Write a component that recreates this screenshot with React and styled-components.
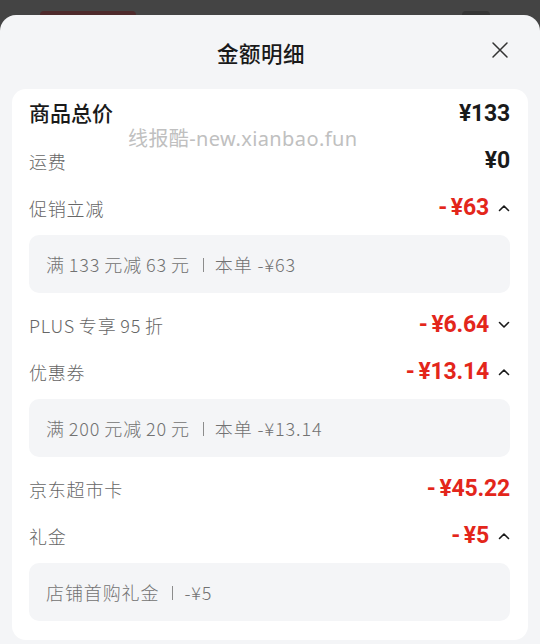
import React from "react";
import styled, { createGlobalStyle } from "styled-components";

const GlobalStyle = createGlobalStyle`
  html, body {
    margin: 0;
    padding: 0;
    background: #444444;
  }
  body {
    font-family: "Noto Sans CJK SC", "Noto Sans", sans-serif;
  }
`;

const Page = styled.div`
  width: 540px;
  height: 644px;
  position: relative;
  overflow: hidden;
  background: #444444;
  padding-top: 15px;
  box-sizing: border-box;
`;

const Peek = styled.div`
  position: absolute;
  top: 11px;
  left: ${(p) => p.left}px;
  width: ${(p) => p.width}px;
  height: 8px;
  border-radius: 5px;
  background: ${(p) => p.color};
`;

const Sheet = styled.div`
  position: relative;
  background: #f4f5f7;
  border-radius: 16px 16px 0 0;
  height: 629px;
  padding: 0 12px;
  box-sizing: border-box;
`;

const Header = styled.div`
  height: 74px;
  display: flex;
  align-items: center;
  justify-content: center;
  position: relative;

  h1 {
    margin: 0 18px 0 0;
    font-size: 21.5px;
    font-weight: 500;
    color: #1a1a1a;
    letter-spacing: 0.5px;
  }
`;

const Close = styled.div`
  position: absolute;
  right: 19px;
  top: 26px;
  width: 18px;
  height: 18px;
  display: flex;
`;

const Card = styled.div`
  position: relative;
  background: #ffffff;
  border-radius: 14px;
  padding: 1px 18px 11px 17px;
`;

const Row = styled.div`
  height: 47px;
  display: flex;
  align-items: center;
  justify-content: space-between;
`;

const Label = styled.span`
  font-size: ${(p) => (p.strong ? "21px" : "18px")};
  font-weight: ${(p) => (p.strong ? 500 : 300)};
  letter-spacing: ${(p) => (p.strong ? "0" : "0.8px")};
  color: ${(p) => (p.strong ? "#1a1a1a" : "#666666")};
  white-space: pre;
  margin-top: ${(p) => (p.strong ? "-3px" : "0")};
`;

const Right = styled.div`
  display: flex;
  align-items: center;
  gap: 9px;
`;

const Amount = styled.span`
  font-family: Roboto, "Noto Sans CJK SC", sans-serif;
  font-size: 23px;
  font-weight: 700;
  letter-spacing: -0.2px;
  color: ${(p) => (p.red ? "#e3261b" : "#1a1a1a")};
  white-space: pre;
`;

const Detail = styled.div`
  height: 58px;
  margin-top: 4px;
  margin-bottom: 8px;
  background: #f4f5f7;
  border-radius: 10px;
  display: flex;
  align-items: center;
  padding-left: 17px;
  font-size: 18px;
  font-weight: 300;
  letter-spacing: 0.9px;
  color: #727272;
  white-space: pre;
`;

const Divider = styled.span`
  width: 1px;
  height: 14px;
  background: #8c8c8c;
  margin: 1px 11px 0 13px;
`;

const Watermark = styled.div`
  position: absolute;
  left: 116px;
  top: 34px;
  font-family: "Noto Sans", "Noto Sans CJK SC", sans-serif;
  font-size: 20px;
  letter-spacing: 0.4px;
  color: #c0c0c0;
  pointer-events: none;
`;

const Chevron = ({ up }) => (
  <svg width="12" height="8" viewBox="0 0 12 8">
    <path
      d={up ? "M1.5 6.5 L6 2 L10.5 6.5" : "M1.5 1.5 L6 6 L10.5 1.5"}
      fill="none"
      stroke="#1a1a1a"
      strokeWidth="1.6"
      strokeLinecap="round"
      strokeLinejoin="round"
    />
  </svg>
);

const items = [
  { label: "商品总价", amount: "¥133", strong: true },
  { label: "运费", amount: "¥0" },
  { label: "促销立减", amount: "-\u2006¥63", red: true, chevron: "up", detail: ["满\u2006133\u2006元减\u200663\u2006元", "本单 -¥63"] },
  { label: "PLUS\u2006专享\u200695\u2006折", amount: "-\u2006¥6.64", red: true, chevron: "down" },
  { label: "优惠券", amount: "-\u2006¥13.14", red: true, chevron: "up", detail: ["满\u2006200\u2006元减\u200620\u2006元", "本单 -¥13.14"] },
  { label: "京东超市卡", amount: "-\u2006¥45.22", red: true },
  { label: "礼金", amount: "-\u2006¥5", red: true, chevron: "up", detail: ["店铺首购礼金", "-¥5"] },
];

export default function App() {
  return (
    <>
      <GlobalStyle />
      <Page>
        <Peek left={40} width={96} color="#4e2a2c" />
        <Peek left={462} width={28} color="#353535" />
        <Sheet>
          <Header>
            <h1>金额明细</h1>
            <Close>
              <svg width="18" height="18" viewBox="0 0 18 18">
                <path d="M2 2 L16 16 M16 2 L2 16" stroke="#333" strokeWidth="1.5" strokeLinecap="round" />
              </svg>
            </Close>
          </Header>
          <Card>
            <Watermark>线报酷-new.xianbao.fun</Watermark>
            {items.map((it) => (
              <React.Fragment key={it.label}>
                <Row>
                  <Label strong={it.strong}>{it.label}</Label>
                  <Right>
                    <Amount red={it.red}>{it.amount}</Amount>
                    {it.chevron && <Chevron up={it.chevron === "up"} />}
                  </Right>
                </Row>
                {it.detail && (
                  <Detail>
                    {it.detail[0]}
                    <Divider />
                    {it.detail[1]}
                  </Detail>
                )}
              </React.Fragment>
            ))}
          </Card>
        </Sheet>
      </Page>
    </>
  );
}
